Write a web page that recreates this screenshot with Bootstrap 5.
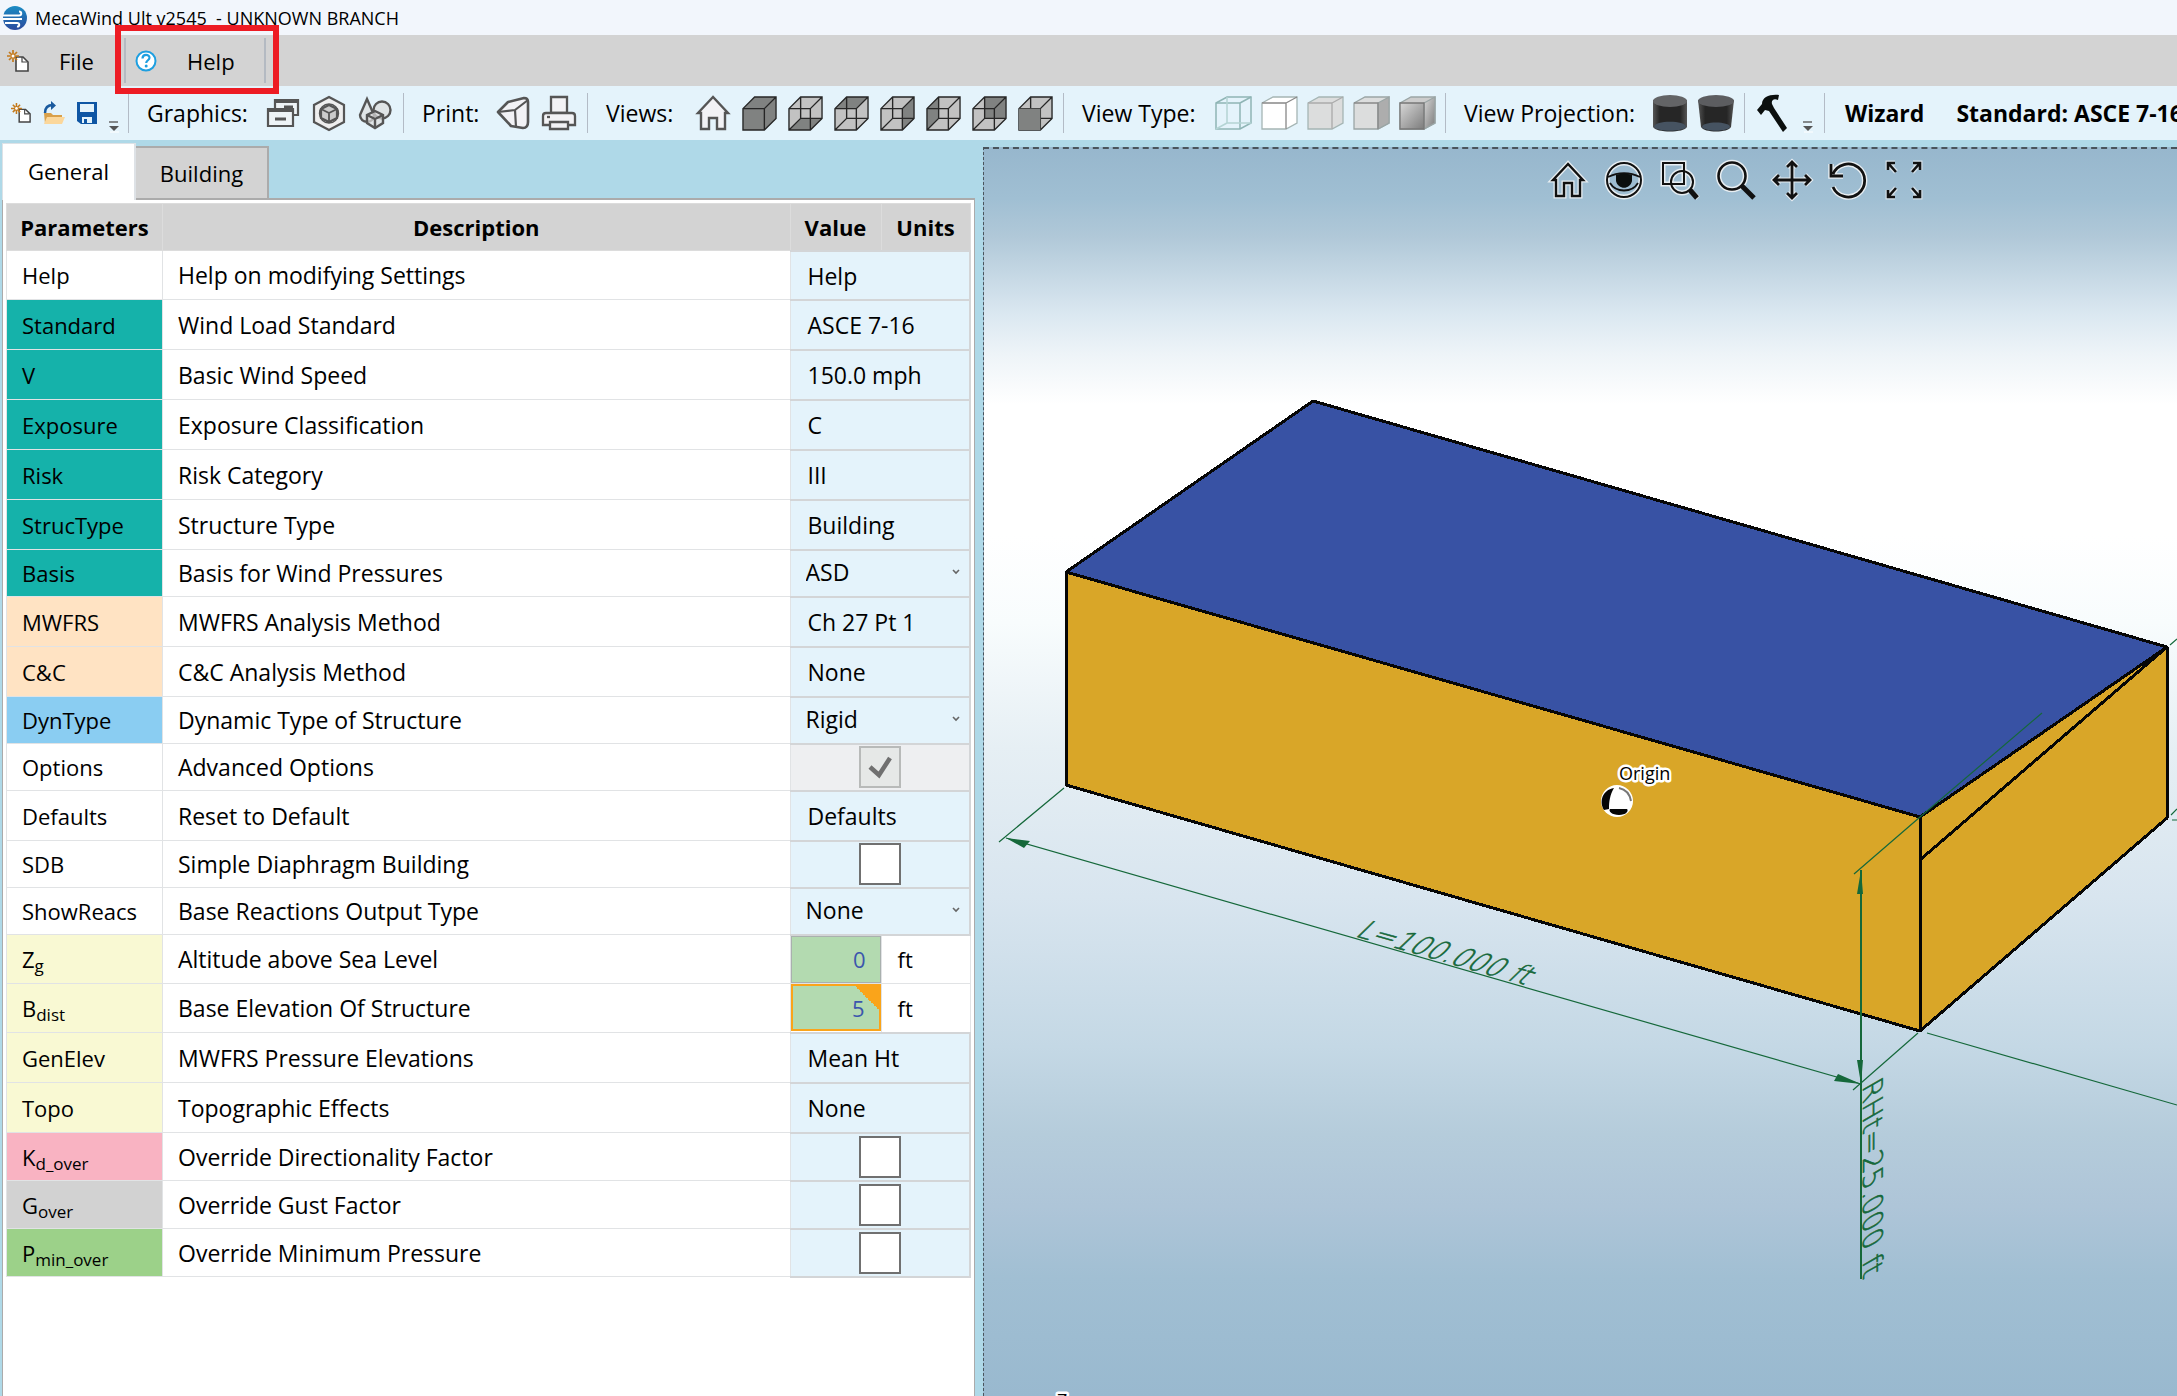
<!DOCTYPE html>
<html lang="en">
<head>
<meta charset="utf-8">
<meta name="viewport" content="width=device-width, initial-scale=1">
<title>MecaWind Ult v2545 - UNKNOWN BRANCH</title>
<link href="https://cdn.jsdelivr.net/npm/bootstrap@5.3.0/dist/css/bootstrap.min.css" rel="stylesheet">
<style>
  :root { --ice:#e4f3fb; --silver:#d3d3d3; --line:#e1e3e5; }
  body { font-family:"Open Sans","Noto Sans",sans-serif; font-size:22px; line-height:30px; color:#000; background:#afd9e8; }
  svg { display:block; overflow:visible; }
  .title-bar { height:35px; background:#f2f6fc; font-size:18px; padding-left:3px; gap:8px; }
  .menu-bar { height:51px; background:var(--silver); position:relative; }
  .menu-bar .btn { font-size:22px; line-height:30px; color:#000; padding:0; border:0; border-radius:0; display:flex; align-items:center; height:45px; }
  .menu-file { width:116px; padding-left:7px !important; gap:30px; }
  .menu-help { width:142px; margin-left:8px; padding-left:9px !important; gap:30px; border-left:2px solid #b4bac2 !important; border-right:2px solid #b4bac2 !important; }
  .callout-frame { position:absolute; left:115px; top:-10px; width:164px; height:69px; border:6px solid #ed1c24; pointer-events:none; z-index:2; }
  .tool-bar { height:54px; background:var(--ice); white-space:nowrap; overflow:hidden; font-size:23px; }
  .tool-group { flex:none; height:40px; border-right:1px solid #b3bbc6; padding-right:5px; }
  .tool-group .tool-label { flex:1; padding-left:18px; }
  .tool-btn { width:46px; height:40px; padding:0; border:0; border-radius:0; display:flex; align-items:center; justify-content:center; }
  .tool-small { width:33px; }
  .g-file { width:129px; padding:0 0 0 4px; } .g-graphics { width:275px; } .g-print { width:184px; } .g-views { width:476px; }
  .g-type { width:382px; } .g-proj { width:299px; } .g-tools { width:80px; padding-right:8px; }
  .overflow-mark { align-self:flex-end; margin-left:auto; margin-right:8px; }
  .g-tools .overflow-mark { margin-right:2px; }
  .tool-text { font-weight:700; font-size:23px; line-height:30px; color:#000; padding:0; border:0; }
  .side-pane { flex:0 0 983px; padding:3px 8px 0 2px; }
  .pane-tabs { --bs-nav-link-padding-x:0; border:0; height:57px; align-items:flex-end; z-index:1; position:relative; }
  .pane-tabs .nav-link { font-size:22px; line-height:30px; color:#000; border:2px solid #ababab; border-radius:0; margin:0; padding:0; background:var(--silver); width:133px; height:54px; }
  .pane-tabs .nav-link.active { background:#fff; color:#000; border-bottom:0; border-left-width:1px; border-top-width:1px; width:134px; height:57px; padding-bottom:2px; }
  .pane-tabs .nav-link:not(.active) { border-left:0; }
  .pane-body { background:#fff; border:1px solid #ababab; border-top-width:2px; border-bottom:0; margin-top:-2px; padding:3px 3px 0 3px; }
  .param-grid { width:100%; table-layout:fixed; border-collapse:collapse; margin:0; }
  .param-grid th, .param-grid td { border:1px solid var(--line); padding:0; vertical-align:middle; height:50px; }
  .param-grid thead th { background:var(--silver); height:47px; text-align:center; font-weight:700; border-color:#dcdcdc; }
  .param-grid tbody th { font-weight:400; padding-left:15px; text-align:left; }
  .param-grid tbody td:nth-child(2) { padding-left:15px; font-size:23px; }
  .param-grid .row-first > * { height:49px; }
  .param-grid .row-combo > * { height:47px; }
  .param-grid .row-tick > * { height:47px; }
  .param-grid .row-num > * { height:49px; }
  .param-grid .row-over > * { height:48px; }
  .param-grid sub { font-size:17px; }
  .param-grid .units-cell { padding-left:16px; }
  .k-teal { background:#15b2aa; } .k-peach { background:#ffe3c3; } .k-sky { background:#8acdf2; }
  .k-cream { background:#f9f9d3; } .k-pink { background:#f9b3c2; } .k-gray { background:#d2d2d2; } .k-green { background:#9cd189; }
  .param-grid .val { background:var(--ice); border:2px solid #d3d5d7; border-left-width:1px; }
  .param-grid .val-off { background:#eeeff1; }
  .val .btn { width:100%; height:46px; padding:1px 0 0 17px; text-align:left; border:0; border-radius:0; font-size:23px; line-height:30px; color:#000; }
  .val .form-select { height:44px; border:0; border-radius:0; padding:0 30px 2px 15px; font-size:23px; line-height:30px; color:#000; background:transparent url("data:image/svg+xml,%3Csvg xmlns='http://www.w3.org/2000/svg' viewBox='0 0 8 6'%3E%3Cpath d='M1 1l3 3 3-3' fill='none' stroke='%23666' stroke-width='1.6'/%3E%3C/svg%3E") no-repeat right 9px top 18px / 8px 6px; }
  .val .form-check-input { display:block; width:42px; height:42px; margin:0 auto; float:none; border:2px solid #707070; border-radius:0; background-color:#fff; }
  .val .form-check-input:disabled { opacity:1; border-color:#b8bab9; background:#e6e8e7 url("data:image/svg+xml,%3Csvg xmlns='http://www.w3.org/2000/svg' viewBox='0 0 38 38'%3E%3Cpath d='M9 19l9 8 11-17' fill='none' stroke='%23707070' stroke-width='4.5'/%3E%3C/svg%3E") center / 38px 38px; }
  .num-box { display:block; width:100%; height:47px; padding:0 14px 0 0; text-align:right; border:1px solid #a9b0ae; border-radius:0; background:#b3dab0; color:#3b56ad; font-size:22px; }
  .num-flag { border:2px solid #faa41a; background:linear-gradient(to bottom left,#faa41a 50%,transparent 50%) no-repeat right top / 24px 24px #b3dab0; }
  .scene { margin-top:7px; border:2px dashed #49545c; border-right:0; border-bottom:0; border-left-width:1px; overflow:hidden; background:#99b9cf; }
  .scene-art { position:absolute; left:0; top:0; width:100%; height:100%; overflow:hidden; }
  .scene-bar { position:relative; padding:11px 0 0 556px; }
  .scene-bar .btn { width:56px; height:40px; padding:0; border:0; display:flex; align-items:center; justify-content:center; }
  .halo { paint-order:stroke; stroke:#fff; stroke-width:5px; stroke-linejoin:round; font-size:18px; }
  .dim-text { font-family:"DejaVu Sans",sans-serif; font-weight:200; font-size:27px; fill:#15683a; stroke:#15683a; stroke-width:.6px; }
  .wire { stroke:#262626; stroke-width:1.4; fill:none; }
</style>
<script src="https://cdn.jsdelivr.net/npm/bootstrap@5.3.0/dist/js/bootstrap.bundle.min.js"></script>
</head>
<body class="d-flex flex-column vh-100 overflow-hidden">

<svg width="0" height="0" class="position-absolute" aria-hidden="true">
  <defs>
    <symbol id="i-new" viewBox="0 0 22 22">
      <path d="M9 7h7l5 5v9H9z" fill="#fff" stroke="#444" stroke-width="1.6"/><path d="M15 7v5h5" fill="none" stroke="#444" stroke-width="1.2"/>
      <path d="M6 0v12M0 6h12M2 2l8 8M10 2l-8 8" stroke="#c47a1c" stroke-width="1.7"/><circle cx="6" cy="6" r="1.5" fill="#fff"/>
    </symbol>
    <symbol id="c-top" viewBox="0 0 36 36"><path d="M1 13L13 1h22L23 13z"/></symbol>
    <symbol id="c-bottom" viewBox="0 0 36 36"><path d="M1 35l12-12h22L23 35z"/></symbol>
    <symbol id="c-right" viewBox="0 0 36 36"><path d="M23 13L35 1v22L23 35z"/></symbol>
    <symbol id="c-left" viewBox="0 0 36 36"><path d="M1 13L13 1v22L1 35z"/></symbol>
    <symbol id="c-back" viewBox="0 0 36 36"><path d="M13 1h22v22H13z"/></symbol>
    <symbol id="c-front" viewBox="0 0 36 36"><path d="M1 13h22v22H1z"/></symbol>
    <symbol id="c-hull" viewBox="0 0 36 36"><path d="M1 13L13 1h22v22L23 35H1z" fill="#c2c2c2"/></symbol>
    <symbol id="c-wire" viewBox="0 0 36 36"><path class="wire" d="M1 13L13 1h22v22L23 35H1zM1 13h22v22M23 13L35 1M13 1v22h22M13 23L1 35"/></symbol>
    <symbol id="i-over" viewBox="0 0 12 12"><path d="M1 1h9" stroke="#666" stroke-width="1.5"/><path d="M1 5h10L6 10z" fill="#555"/><path d="M2 11h9" stroke="#fff"/></symbol>
    <linearGradient id="shade" x1="0" y1="0" x2="1" y2="1"><stop offset="0" stop-color="#d8d8d8"/><stop offset="1" stop-color="#7c7c7c"/></linearGradient>
    <linearGradient id="drum" x1="0" x2="1"><stop offset="0" stop-color="#555"/><stop offset=".2" stop-color="#262626"/><stop offset=".8" stop-color="#262626"/><stop offset="1" stop-color="#555"/></linearGradient>
    <linearGradient id="sky" x1="0" y1="0" x2="0" y2="1">
      <stop offset="0" stop-color="#97b7cd"/><stop offset=".04" stop-color="#a0bfd3"/><stop offset=".07" stop-color="#b0c8d8"/><stop offset=".133" stop-color="#dbe8f1"/><stop offset=".165" stop-color="#eef4f8"/><stop offset=".205" stop-color="#fff"/><stop offset=".31" stop-color="#fff"/><stop offset=".38" stop-color="#f8fcfd"/><stop offset=".48" stop-color="#e6eff4"/><stop offset=".6" stop-color="#d8e5ef"/><stop offset=".72" stop-color="#c4d8e5"/><stop offset=".79" stop-color="#b5ccdb"/><stop offset=".848" stop-color="#aec5d8"/><stop offset=".905" stop-color="#a1bfd3"/><stop offset="1" stop-color="#99b9cf"/>
    </linearGradient>
  </defs>
</svg>

<header class="title-bar d-flex align-items-center flex-shrink-0">
  <svg width="24" height="24" viewBox="0 0 24 24" aria-hidden="true"><defs><linearGradient id="lg" x1="0" y1="0" x2="0" y2="1"><stop offset="0" stop-color="#1b8cc4"/><stop offset="1" stop-color="#2b4a9d"/></linearGradient></defs><circle cx="12" cy="12" r="12" fill="url(#lg)"/><path d="M0 9.500h16c3 0 3-4 0-4M0 13h19M2 17h12c3 0 3 4 0 3.500" fill="none" stroke="#fff" stroke-width="2"/></svg>
  <span>MecaWind Ult v2545&nbsp; - UNKNOWN BRANCH</span>
</header>

<nav class="menu-bar d-flex align-items-center flex-shrink-0" aria-label="Main menu">
  <button class="btn menu-file" type="button"><svg width="22" height="22" aria-hidden="true"><use href="#i-new"/></svg>File</button>
  <button class="btn menu-help" type="button"><svg width="22" height="22" viewBox="0 0 22 22" aria-hidden="true"><circle cx="11" cy="11" r="9.500" fill="#fff" stroke="#1e9fe0" stroke-width="2"/><path d="M7.500 8.500c0-5 7-4.500 7-.800 0 2.500-3.300 2.600-3.300 5.300" fill="none" stroke="#1e9fe0" stroke-width="2.200"/><circle cx="11.200" cy="16" r="1.500" fill="#1e9fe0"/></svg>Help</button>
  <div class="callout-frame"></div>
</nav>

<div class="tool-bar d-flex align-items-center flex-shrink-0" role="toolbar" aria-label="Tools">
  <div class="tool-group g-file d-flex align-items-center">
    <button class="btn tool-btn tool-small" type="button" aria-label="New"><svg width="20" height="22"><use href="#i-new"/></svg></button>
    <button class="btn tool-btn tool-small" type="button" aria-label="Open"><svg width="22" height="24" viewBox="0 0 22 24"><path d="M1 12h7l2 2h9v9H2z" fill="#d9a04a"/><path d="M4 16h18l-3 7H1z" fill="#fbd79b"/><path d="M2 12c0-6 3-8 8-8" fill="none" stroke="#1a5a9e" stroke-width="2.500"/><path d="M8 0l5 4.500L8 9z" fill="#1a5a9e"/></svg></button>
    <button class="btn tool-btn tool-small" type="button" aria-label="Save"><svg width="22" height="24" viewBox="0 0 22 24"><path d="M1 1h20v22H5l-4-3z" fill="#0f56a4"/><path d="M4 3h14v8H4zM6 16h10v6H6z" fill="#e4f3fb"/><path d="M8 18h3v4H8z" fill="#0f56a4"/></svg></button>
    <svg class="overflow-mark" width="12" height="12" aria-hidden="true"><use href="#i-over"/></svg>
  </div>
  <div class="tool-group g-graphics d-flex align-items-center">
    <span class="tool-label">Graphics:</span>
    <button class="btn tool-btn" type="button" aria-label="Cascade"><svg width="34" height="30" viewBox="0 0 34 30"><g fill="#eef3f6" stroke="#555" stroke-width="2.200"><path d="M9 11V2h23v15h-5"/><path d="M2 11h25v17H2z"/></g><path d="M9 4h23M2 13h25" stroke="#555" stroke-width="2"/><path d="M18 9h9M9 21h11" stroke="#555" stroke-width="3"/></svg></button>
    <button class="btn tool-btn" type="button" aria-label="Model"><svg width="34" height="36" viewBox="0 0 34 36" fill="none" stroke="#555" stroke-width="2.200"><path d="M17 2l15 8v17l-15 8-15-8V10z" fill="#eee"/><path d="M17 10l8 4v9l-8 4-8-4v-9z" fill="#ccc"/><path d="M9 14l8 4 8-4M17 18v9" stroke-width="1.800"/><circle cx="17" cy="18.500" r="9.500" stroke-width="1.400"/></svg></button>
    <button class="btn tool-btn" type="button" aria-label="Shapes"><svg width="34" height="32" viewBox="0 0 34 32" fill="#ddd" fill-opacity=".7" stroke="#555" stroke-width="2.400"><path d="M9 2l7 16c0 9-14 9-14 0z"/><circle cx="24" cy="13" r="8.500"/><path d="M17 14l8 4v8l-8 5-8-5v-8z"/><path d="M9 18l8 4 8-4M17 22v8" fill="none"/></svg></button>
  </div>
  <div class="tool-group g-print d-flex align-items-center">
    <span class="tool-label">Print:</span>
    <button class="btn tool-btn" type="button" aria-label="Print model"><svg width="34" height="34" viewBox="0 0 34 34" fill="#f2f2f5" stroke="#555" stroke-width="2.600" stroke-linejoin="round"><path d="M2 16L12 6l16-4c3 0 4 2 4 4v20c0 4-2 6-5 6l-12-2z"/><path d="M2 16l17-2 13-10M19 14l1 17" fill="none" stroke-width="2.200"/></svg></button>
    <button class="btn tool-btn" type="button" aria-label="Print"><svg width="36" height="36" viewBox="0 0 36 36" fill="#f2f2f5" stroke="#555" stroke-width="2.300"><path d="M10 2h16v16H10z"/><path d="M2 21c0-2 1-3 3-3h26c2 0 3 1 3 3v9H2z"/><path d="M9 27h18v7H9z"/><path d="M6 22h3"/></svg></button>
  </div>
  <div class="tool-group g-views d-flex align-items-center">
    <span class="tool-label">Views:</span>
    <button class="btn tool-btn" type="button" aria-label="Home view"><svg width="36" height="36" viewBox="0 0 36 36"><path d="M18 2L3 18h3v16h8V23h8v11h8V18h3z" fill="#f2f2f5" stroke="#555" stroke-width="2.400"/></svg></button>
    <button class="btn tool-btn" type="button" aria-label="Isometric"><svg width="35" height="35" viewBox="0 0 36 36"><path d="M1 13L13 1h22v22L23 35H1z" fill="#808281"/><path class="wire" d="M1 13L13 1h22v22L23 35H1zM1 13h22v22M23 13L35 1"/></svg></button>
    <button class="btn tool-btn" type="button" aria-label="Bottom"><svg width="35" height="35" fill="#808281"><use href="#c-hull"/><use href="#c-bottom"/><use href="#c-wire"/></svg></button>
    <button class="btn tool-btn" type="button" aria-label="Top"><svg width="35" height="35" fill="#808281"><use href="#c-hull"/><use href="#c-top"/><use href="#c-wire"/></svg></button>
    <button class="btn tool-btn" type="button" aria-label="Right"><svg width="35" height="35" fill="#808281"><use href="#c-hull"/><use href="#c-right"/><use href="#c-wire"/></svg></button>
    <button class="btn tool-btn" type="button" aria-label="Left"><svg width="35" height="35" fill="#808281"><use href="#c-hull"/><use href="#c-left"/><use href="#c-wire"/></svg></button>
    <button class="btn tool-btn" type="button" aria-label="Back"><svg width="35" height="35" fill="#808281"><use href="#c-hull"/><use href="#c-back"/><use href="#c-wire"/></svg></button>
    <button class="btn tool-btn" type="button" aria-label="Front"><svg width="35" height="35" fill="#808281"><use href="#c-hull"/><use href="#c-wire"/><use href="#c-front"/></svg></button>
  </div>
  <div class="tool-group g-type d-flex align-items-center">
    <span class="tool-label">View Type:</span>
    <button class="btn tool-btn" type="button" aria-label="Wireframe"><svg width="37" height="34" viewBox="0 0 37 34" fill="none" stroke="#8fb5b5" stroke-width="1.500"><path d="M1 7L12 1h24v26l-11 6H1z"/><path d="M1 7h24v26M25 7l11-6"/><path d="M12 1v26h24M12 27L1 33" stroke="#b4d4d4"/></svg></button>
    <button class="btn tool-btn" type="button" aria-label="Hidden line"><svg width="37" height="34" viewBox="0 0 37 34" fill="#fff" stroke="#a5b5b4" stroke-width="1.300"><path d="M1 7L12 1h24v26l-11 6H1z"/><path d="M1 7h24v26M25 7l11-6" stroke="#888"/></svg></button>
    <button class="btn tool-btn" type="button" aria-label="Flat"><svg width="37" height="34" viewBox="0 0 37 34" fill="#dcdddd" stroke="#a5b5b4" stroke-width="1.300"><path d="M1 7L12 1h24v26l-11 6H1z"/><path d="M1 7h24v26M25 7l11-6" stroke="#aaa"/></svg></button>
    <button class="btn tool-btn" type="button" aria-label="Shaded"><svg width="37" height="34" viewBox="0 0 37 34" fill="#dcdddd" stroke="#9aa5a5" stroke-width="1.300"><path d="M1 7L12 1h24v26l-11 6H1z"/><path d="M25 7l11-6v26l-11 6z" fill="#adadad"/><path d="M1 7h24v26" fill="none" stroke="#888"/></svg></button>
    <button class="btn tool-btn" type="button" aria-label="Rendered"><svg width="37" height="34" viewBox="0 0 37 34" fill="#ccc" stroke="#9aa5a5" stroke-width="1.300"><path d="M1 7L12 1h24v26l-11 6H1z"/><path d="M25 7l11-6v26l-11 6z" fill="url(#shade)"/><path d="M1 7h24v26H1z" fill="url(#shade)" stroke="#777"/></svg></button>
  </div>
  <div class="tool-group g-proj d-flex align-items-center">
    <span class="tool-label">View Projection:</span>
    <button class="btn tool-btn" type="button" aria-label="Orthographic"><svg width="36" height="38" viewBox="0 0 36 38"><path d="M1 6v27c3 6 31 6 34 0V6z" fill="url(#drum)"/><ellipse cx="18" cy="7" rx="17" ry="6" fill="#636466"/><path d="M2 33c0-7 32-7 32 0-3 5-29 5-32 0z" fill="#465361"/></svg></button>
    <button class="btn tool-btn" type="button" aria-label="Perspective"><svg width="36" height="38" viewBox="0 0 36 38"><path d="M0 6l3 27c3 6 27 6 30 0l3-27z" fill="url(#drum)"/><ellipse cx="18" cy="7" rx="18" ry="6" fill="#5c5d60"/><path d="M4 33c0-6 28-6 28 0-3 5-25 5-28 0z" fill="#465361"/></svg></button>
  </div>
  <div class="tool-group g-tools d-flex align-items-center">
    <button class="btn tool-btn ms-1" type="button" aria-label="Settings"><svg width="32" height="38" viewBox="0 0 32 38"><path d="M1 16l5-6C6 3 14 0 23 1l-1 5c-4-2-7 0-6 4l2 4 13 20-4 4-14-21-4-1-4 5z" fill="#0b0f0e"/></svg></button>
    <svg class="overflow-mark" width="12" height="12" aria-hidden="true"><use href="#i-over"/></svg>
  </div>
  <div class="d-flex ps-1">
    <button class="btn tool-text ms-3" type="button">Wizard</button>
    <span class="tool-text ms-4 ps-2">Standard: ASCE 7-16</span>
  </div>
</div>

<main class="d-flex flex-grow-1 overflow-hidden">
  <section class="side-pane d-flex flex-column">
    <ul class="nav nav-tabs pane-tabs flex-shrink-0" role="tablist">
      <li class="nav-item" role="presentation"><button class="nav-link active" type="button" role="tab" aria-selected="true">General</button></li>
      <li class="nav-item" role="presentation"><button class="nav-link" type="button" role="tab" aria-selected="false">Building</button></li>
    </ul>
    <div class="pane-body flex-grow-1">
      <table class="param-grid">
        <colgroup><col style="width:156px"><col><col style="width:91px"><col style="width:89px"></colgroup>
        <thead><tr><th scope="col">Parameters</th><th scope="col">Description</th><th scope="col">Value</th><th scope="col">Units</th></tr></thead>
        <tbody>
          <tr class="row-first"><th scope="row">Help</th><td>Help on modifying Settings</td><td class="val" colspan="2"><button class="btn" type="button">Help</button></td></tr>
          <tr><th scope="row" class="k-teal">Standard</th><td>Wind Load Standard</td><td class="val" colspan="2"><button class="btn" type="button">ASCE 7-16</button></td></tr>
          <tr><th scope="row" class="k-teal">V</th><td>Basic Wind Speed</td><td class="val" colspan="2"><button class="btn" type="button">150.0 mph</button></td></tr>
          <tr><th scope="row" class="k-teal">Exposure</th><td>Exposure Classification</td><td class="val" colspan="2"><button class="btn" type="button">C</button></td></tr>
          <tr><th scope="row" class="k-teal">Risk</th><td>Risk Category</td><td class="val" colspan="2"><button class="btn" type="button">III</button></td></tr>
          <tr><th scope="row" class="k-teal">StrucType</th><td>Structure Type</td><td class="val" colspan="2"><button class="btn" type="button">Building</button></td></tr>
          <tr class="row-combo"><th scope="row" class="k-teal"><label for="basis">Basis</label></th><td>Basis for Wind Pressures</td><td class="val" colspan="2"><select class="form-select" id="basis"><option>ASD</option></select></td></tr>
          <tr><th scope="row" class="k-peach">MWFRS</th><td>MWFRS Analysis Method</td><td class="val" colspan="2"><button class="btn" type="button">Ch 27 Pt 1</button></td></tr>
          <tr><th scope="row" class="k-peach">C&amp;C</th><td>C&amp;C Analysis Method</td><td class="val" colspan="2"><button class="btn" type="button">None</button></td></tr>
          <tr class="row-combo"><th scope="row" class="k-sky"><label for="dyntype">DynType</label></th><td>Dynamic Type of Structure</td><td class="val" colspan="2"><select class="form-select" id="dyntype"><option>Rigid</option></select></td></tr>
          <tr class="row-tick"><th scope="row"><label for="options">Options</label></th><td>Advanced Options</td><td class="val val-off" colspan="2"><input class="form-check-input" type="checkbox" id="options" checked disabled></td></tr>
          <tr><th scope="row">Defaults</th><td>Reset to Default</td><td class="val" colspan="2"><button class="btn" type="button">Defaults</button></td></tr>
          <tr class="row-tick"><th scope="row"><label for="sdb">SDB</label></th><td>Simple Diaphragm Building</td><td class="val" colspan="2"><input class="form-check-input" type="checkbox" id="sdb"></td></tr>
          <tr class="row-combo"><th scope="row"><label for="reacs">ShowReacs</label></th><td>Base Reactions Output Type</td><td class="val" colspan="2"><select class="form-select" id="reacs"><option>None</option></select></td></tr>
          <tr class="row-num"><th scope="row" class="k-cream"><label for="zg">Z<sub>g</sub></label></th><td>Altitude above Sea Level</td><td><input class="num-box" type="text" id="zg" value="0"></td><td class="units-cell">ft</td></tr>
          <tr class="row-num"><th scope="row" class="k-cream"><label for="bdist">B<sub>dist</sub></label></th><td>Base Elevation Of Structure</td><td><input class="num-box num-flag" type="text" id="bdist" value="5"></td><td class="units-cell">ft</td></tr>
          <tr><th scope="row" class="k-cream">GenElev</th><td>MWFRS Pressure Elevations</td><td class="val" colspan="2"><button class="btn" type="button">Mean Ht</button></td></tr>
          <tr><th scope="row" class="k-cream">Topo</th><td>Topographic Effects</td><td class="val" colspan="2"><button class="btn" type="button">None</button></td></tr>
          <tr class="row-over"><th scope="row" class="k-pink"><label for="kd">K<sub>d_over</sub></label></th><td>Override Directionality Factor</td><td class="val" colspan="2"><input class="form-check-input" type="checkbox" id="kd"></td></tr>
          <tr class="row-over"><th scope="row" class="k-gray"><label for="gover">G<sub>over</sub></label></th><td>Override Gust Factor</td><td class="val" colspan="2"><input class="form-check-input" type="checkbox" id="gover"></td></tr>
          <tr class="row-over"><th scope="row" class="k-green"><label for="pmin">P<sub>min_over</sub></label></th><td>Override Minimum Pressure</td><td class="val" colspan="2"><input class="form-check-input" type="checkbox" id="pmin"></td></tr>
        </tbody>
      </table>
    </div>
  </section>

  <section class="scene flex-grow-1 position-relative" aria-label="Model view">
    <svg class="scene-art" viewBox="984 149 1193 1247" preserveAspectRatio="xMinYMin slice">
      <rect x="984" y="149" width="1193" height="1247" fill="url(#sky)"/>
      <g stroke="#060606" stroke-width="3" stroke-linejoin="round" shape-rendering="crispEdges">
        <path d="M1066 572L1920 817v214L1066 785z" fill="#d9a628"/>
        <path d="M1920 817L2167 647v171L1920 1031z" fill="#d9a628"/>
        <path d="M1313 401L2167 647 1920 817 1066 572z" fill="#3852a4"/>
        <path d="M1921 859L2167 647" fill="none"/>
      </g>
      <g stroke="#15683a" stroke-width="1.200" fill="none">
        <path d="M1854 874L1920 817 2042 713M1853 1090l65-57M999 842l65-54M1006 838l855 246M1927 1033l250 72M2170 645l7-6M2171 815l6-6M2172 820h5"/>
        <path d="M1861 870v409" stroke-width="2"/>
      </g>
      <g fill="#15683a"><path d="M1861 870l-4 24h6zM1861 1084l-4-24h6zM1006 838l24 3-6 7zM1861 1084l-27-3 4-7z"/></g>
      <text class="dim-text" transform="translate(1354 936) rotate(16) skewX(-30)">L=100.000 ft</text>
      <text class="dim-text" transform="translate(1863 1086) rotate(90) skewX(30)">RHt=25.000 ft</text>
      <text class="halo" x="1619" y="780">Origin</text>
      <circle cx="1617" cy="801" r="16" fill="#fff"/>
      <path d="M1614 788c-12 2-15 14-10 22l5-1c0-8 1-14 5-21zM1610 809h17c2 2-1 6-8 6s-11-4-9-6z" fill="#060606"/>
      <path d="M1619 788q10 2 12 13" fill="none" stroke="#777" stroke-width="2"/>
      <text class="halo" x="1057" y="1407">Z</text>
    </svg>
    <div class="scene-bar d-flex">
      <button class="btn" type="button" aria-label="Home"><svg width="38" height="38" viewBox="0 0 38 38" fill="none"><path d="M19 3L4 19h3v16h8V22h8v13h8V19h3z" stroke="#e8eef2" stroke-width="5"/><path d="M19 3L4 19h3v16h8V22h8v13h8V19h3z" stroke="#111" stroke-width="2.400"/></svg></button>
      <button class="btn" type="button" aria-label="Look at"><svg width="40" height="40" viewBox="0 0 40 40" fill="none"><circle cx="20" cy="20" r="17" stroke="#e8eef2" stroke-width="5"/><circle cx="20" cy="20" r="17" stroke="#111" stroke-width="2"/><path d="M4 17c10-5 22-5 32 0M6 23c6 10 22 10 28 0" stroke="#111" stroke-width="1.800"/><path d="M12 15c5-2 11-2 16 0v6c-2 9-14 9-16 0z" fill="#0b0f0e"/></svg></button>
      <button class="btn" type="button" aria-label="Zoom window"><svg width="40" height="40" viewBox="0 0 40 40" fill="none"><g stroke="#e8eef2" stroke-width="5"><path d="M3 3h21v21H3z"/><circle cx="22" cy="22" r="11"/><path d="M30 30l8 8"/></g><g stroke="#111" stroke-width="2"><path d="M3 3h21v21H3z"/><circle cx="22" cy="22" r="11"/></g><path d="M30 30l7 8" stroke="#111" stroke-width="5"/></svg></button>
      <button class="btn" type="button" aria-label="Zoom"><svg width="40" height="40" viewBox="0 0 40 40" fill="none"><circle cx="16" cy="16" r="13.500" stroke="#e8eef2" stroke-width="5.500"/><circle cx="16" cy="16" r="13.500" stroke="#111" stroke-width="2.600"/><path d="M26 26l12 12" stroke="#111" stroke-width="5"/></svg></button>
      <button class="btn" type="button" aria-label="Pan"><svg width="40" height="40" viewBox="0 0 40 40" fill="none"><path d="M20 3v34M3 20h34M15 7l5-5 5 5M15 33l5 5 5-5M7 15l-5 5 5 5M33 15l5 5-5 5" stroke="#e8eef2" stroke-width="5"/><path d="M20 3v34M3 20h34M15 7l5-5 5 5M15 33l5 5 5-5M7 15l-5 5 5 5M33 15l5 5-5 5" stroke="#111" stroke-width="2.800"/></svg></button>
      <button class="btn" type="button" aria-label="Rotate"><svg width="40" height="40" viewBox="0 0 40 40" fill="none"><path d="M5 14A16.500 16.500 0 1 1 5 27M3 4v12h12" stroke="#e8eef2" stroke-width="5.500"/><path d="M5 14A16.500 16.500 0 1 1 5 27M3 4v12h12" stroke="#111" stroke-width="2.800"/></svg></button>
      <button class="btn" type="button" aria-label="Zoom fit"><svg width="38" height="40" viewBox="0 0 38 40" fill="none"><path d="M3 10V3h7M3 3l8 9M28 3h7v7M35 3l-8 9M3 30v7h7M3 37l8-9M28 37h7v-7M35 37l-8-9" stroke="#d5e0e8" stroke-width="5"/><path d="M3 10V3h7M3 3l8 9M28 3h7v7M35 3l-8 9M3 30v7h7M3 37l8-9M28 37h7v-7M35 37l-8-9" stroke="#111" stroke-width="2.600"/></svg></button>
    </div>
  </section>
</main>
</body>
</html>
